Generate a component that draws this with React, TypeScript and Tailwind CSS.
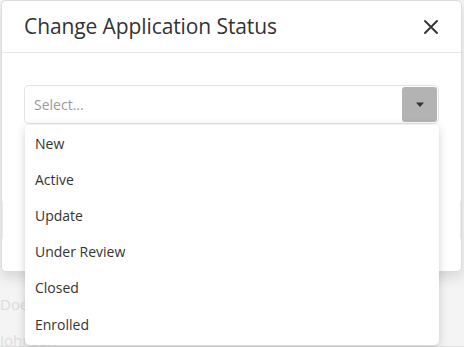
import React from 'react';

const options = ['New', 'Active', 'Update', 'Under Review', 'Closed', 'Enrolled'];

function CaretDown() {
  return (
    <svg width="10" height="6" viewBox="0 0 10 6">
      <path d="M1 0.5h8L5 5z" fill="#333" />
    </svg>
  );
}

function CloseIcon() {
  return (
    <svg width="16" height="16" viewBox="0 0 16 16">
      <path d="M2 2L14 14M14 2L2 14" stroke="#333" strokeWidth="1.9" strokeLinecap="round" />
    </svg>
  );
}

export default function App() {
  return (
    <div
      className="relative w-[464px] h-[347px] overflow-hidden bg-[#f4f4f4]"
      style={{ fontFamily: '"Open Sans", "Noto Sans", sans-serif' }}
    >
      {/* page behind the dialog */}
      <div className="absolute left-0 top-[293px] w-full text-[15px] text-[#dcdcdc]">
        <div className="h-[36px]">Doe</div>
        <div className="h-[18px] border-b border-[#dedede]">Johnson</div>
      </div>

      {/* dialog */}
      <div className="absolute left-[1px] top-0 w-[461px] h-[272px] bg-white border border-[#dcdcdc] rounded-[5px] shadow-[0_6px_14px_rgba(0,0,0,0.12)]">
        <div className="h-[52px] flex items-center justify-between pl-[22px] pr-[22px] border-b border-[#e6e6e6]">
          <span className="text-[21px] text-[#333] tracking-[-0.1px]">Change Application Status</span>
          <button className="p-0 flex items-center"><CloseIcon /></button>
        </div>
        <div className="px-[22px] pt-[32px]">
          <div className="h-[39px] flex items-center justify-between border border-[#e3e3e3] rounded-[5px] pl-[9px] pr-[1px]">
            <span className="text-[14px] text-[#9a9a9a]">Select...</span>
            <div className="w-[35px] h-[35px] rounded-[3px] bg-[#b3b3b3] flex items-center justify-center">
              <CaretDown />
            </div>
          </div>
          <div className="mt-[77px] h-[38px] border-x border-[#ececec] -mx-[22px]" />
        </div>
      </div>

      {/* open menu */}
      <div className="absolute left-[25px] top-[125px] w-[414px] h-[220px] bg-white rounded-[5px] shadow-[0_2px_10px_rgba(0,0,0,0.18)]">
        {options.map((o) => (
          <div key={o} className="h-[36.2px] flex items-center pl-[10px] text-[14px] text-[#333]">
            {o}
          </div>
        ))}
      </div>
    </div>
  );
}
